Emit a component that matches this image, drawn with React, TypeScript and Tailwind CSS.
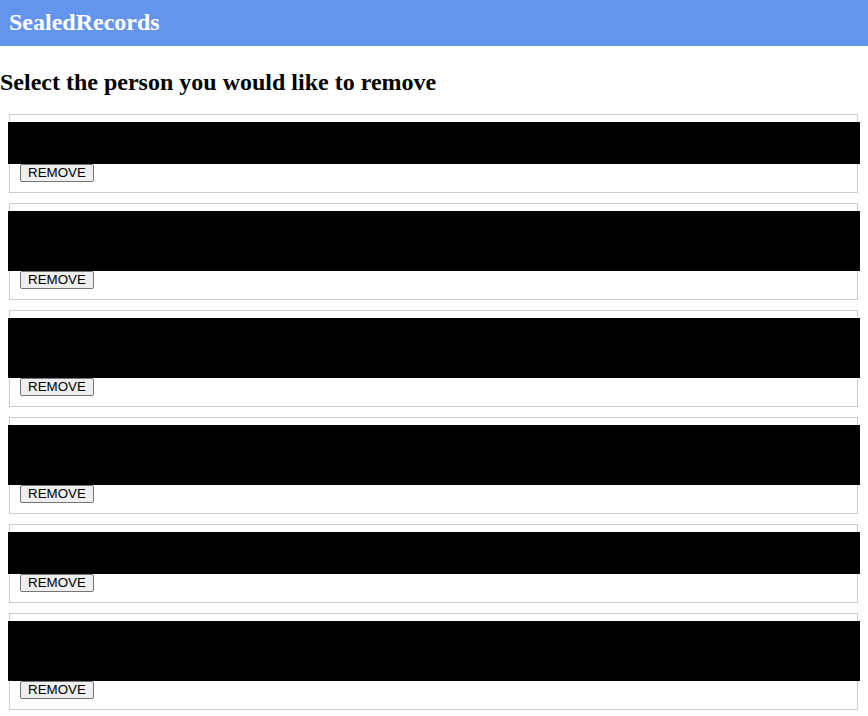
import React from "react";

const heights = [42, 60, 60, 60, 42, 60];

function Card({ h }: { h: number }) {
  return (
    <div className="ml-[9px] mr-[10px] border border-[#cccccc] pt-[7px] pb-[10px]">
      <div className="bg-black ml-[-2px] mr-[-3px]" style={{ height: h }} />
      <button className="ml-[10px] w-[74px] h-[18px] flex items-center justify-center bg-[#efefef] border border-[#767676] rounded-[2px] text-[13.33px] leading-none text-black [font-family:'Liberation_Sans',Arial,sans-serif]">
        REMOVE
      </button>
    </div>
  );
}

export default function App() {
  return (
    <div className="bg-white min-h-[716px] [font-family:'Liberation_Serif','Times_New_Roman',serif]">
      <div className="h-[46px] bg-[#6495ed] px-[9px] pt-[8px]">
        <div className="text-[24px] leading-[28px] font-bold text-white">SealedRecords</div>
      </div>
      <h2 className="mt-[22px] mb-[18px] text-[24px] leading-[28px] font-bold text-black">
        Select the person you would like to remove
      </h2>
      <div className="flex flex-col gap-[10px]">
        {heights.map((h, i) => (
          <Card key={i} h={h} />
        ))}
      </div>
    </div>
  );
}
